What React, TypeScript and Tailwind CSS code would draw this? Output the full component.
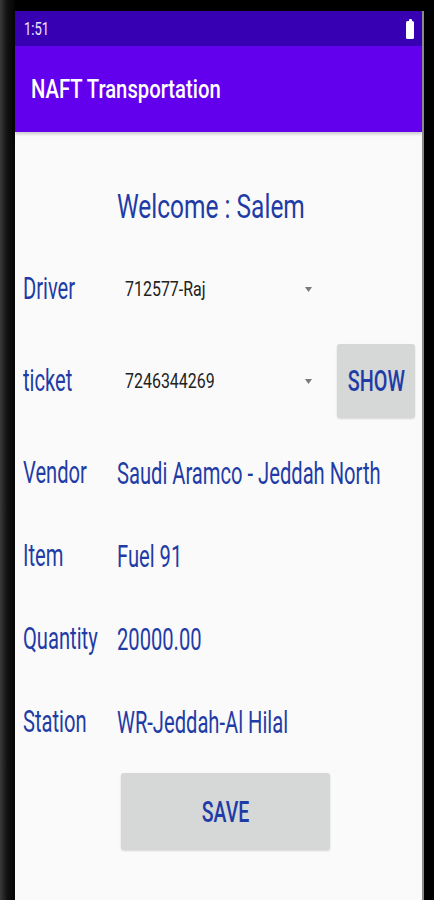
import React from "react";

const blue = "text-[#1f3ca6]";

function Label({ children }: { children: React.ReactNode }) {
  return (
    <div className="w-[94px] shrink-0">
      <span className={`inline-block origin-left scale-x-[0.65] whitespace-nowrap text-[31px] leading-none ${blue}`}>
        {children}
      </span>
    </div>
  );
}

function Value({ children }: { children: React.ReactNode }) {
  return (
    <span className={`inline-block origin-left scale-x-[0.65] whitespace-nowrap text-[31px] leading-none ${blue}`}>
      {children}
    </span>
  );
}

function Spinner({ value }: { value: string }) {
  return (
    <div className="w-[208px] shrink-0 flex items-center justify-between pl-[8px] pr-[13px]">
      <span className="inline-block origin-left scale-x-[0.76] whitespace-nowrap text-[21px] leading-none text-[#222]">
        {value}
      </span>
      <svg width="7" height="5" viewBox="0 0 7 5">
        <path d="M0 0h7L3.5 5z" fill="#7a7a7a" />
      </svg>
    </div>
  );
}

function InfoRow({ label, value }: { label: string; value: string }) {
  return (
    <div className="h-[83px] flex items-center pl-[8px]">
      <Label>{label}</Label>
      <Value>{value}</Value>
    </div>
  );
}

export default function App() {
  return (
    <div className="w-[434px] h-[900px] bg-black flex overflow-hidden font-['Roboto',sans-serif]">
      <div className="w-[15px] shrink-0 bg-gradient-to-r from-[#3a3a3a] via-[#111] to-[#050505]" />
      <div className="w-[407px] shrink-0 mt-[11px] flex flex-col bg-[#fafafa]">
        {/* status bar */}
        <div className="h-[35px] bg-[#3700b3] flex items-center justify-between pl-[9px] pr-[8px]">
          <span className="inline-block origin-left scale-x-[0.72] text-[18px] leading-none text-white/90">1:51</span>
          <div className="flex flex-col items-center">
            <div className="w-[3px] h-[2px] bg-white rounded-t-[1px]" />
            <div className="w-[8px] h-[18px] bg-white rounded-[1.5px]" />
          </div>
        </div>
        {/* app bar */}
        <div className="h-[86px] bg-[#6200ee] flex items-center pl-[16px] shadow-[0_2px_3px_rgba(0,0,0,0.2)]">
          <span className="inline-block origin-left scale-x-[0.81] whitespace-nowrap text-[25px] font-medium leading-none text-white">
            NAFT Transportation
          </span>
        </div>

        {/* content */}
        <div className="pt-[44px] flex flex-col">
          <div className="h-[60px] flex items-center pl-[102px]">
            <span className={`inline-block origin-left scale-x-[0.72] whitespace-nowrap text-[34px] leading-none ${blue}`}>
              Welcome : Salem
            </span>
          </div>

          <div className="mt-[7px] h-[92px] flex items-center pl-[8px]">
            <Label>Driver</Label>
            <Spinner value="712577-Raj" />
          </div>

          <div className="h-[92px] flex items-center pl-[8px]">
            <Label>ticket</Label>
            <Spinner value="7246344269" />
            <button className="ml-[12px] w-[78px] h-[74px] bg-[#d6d7d7] rounded-[3px] shadow-[0_1px_2px_rgba(0,0,0,0.15)] flex items-center justify-center">
              <span className={`inline-block scale-x-[0.66] whitespace-nowrap text-[30px] font-medium leading-none ${blue}`}>
                SHOW
              </span>
            </button>
          </div>

          <div className="mt-[5px] flex flex-col">
            <InfoRow label="Vendor" value="Saudi Aramco - Jeddah North" />
            <InfoRow label="Item" value="Fuel 91" />
            <InfoRow label="Quantity" value="20000.00" />
            <InfoRow label="Station" value="WR-Jeddah-Al Hilal" />
          </div>

          <button className="mt-[9px] ml-[106px] w-[209px] h-[77px] bg-[#d6d7d7] rounded-[3px] shadow-[0_1px_2px_rgba(0,0,0,0.15)] flex items-center justify-center">
            <span className={`inline-block scale-x-[0.65] whitespace-nowrap text-[30px] font-medium leading-none ${blue}`}>
              SAVE
            </span>
          </button>
        </div>
      </div>
      <div className="w-[2px] shrink-0 mt-[11px] bg-[#8a8a8a]" />
      <div className="flex-1 bg-black" />
    </div>
  );
}
